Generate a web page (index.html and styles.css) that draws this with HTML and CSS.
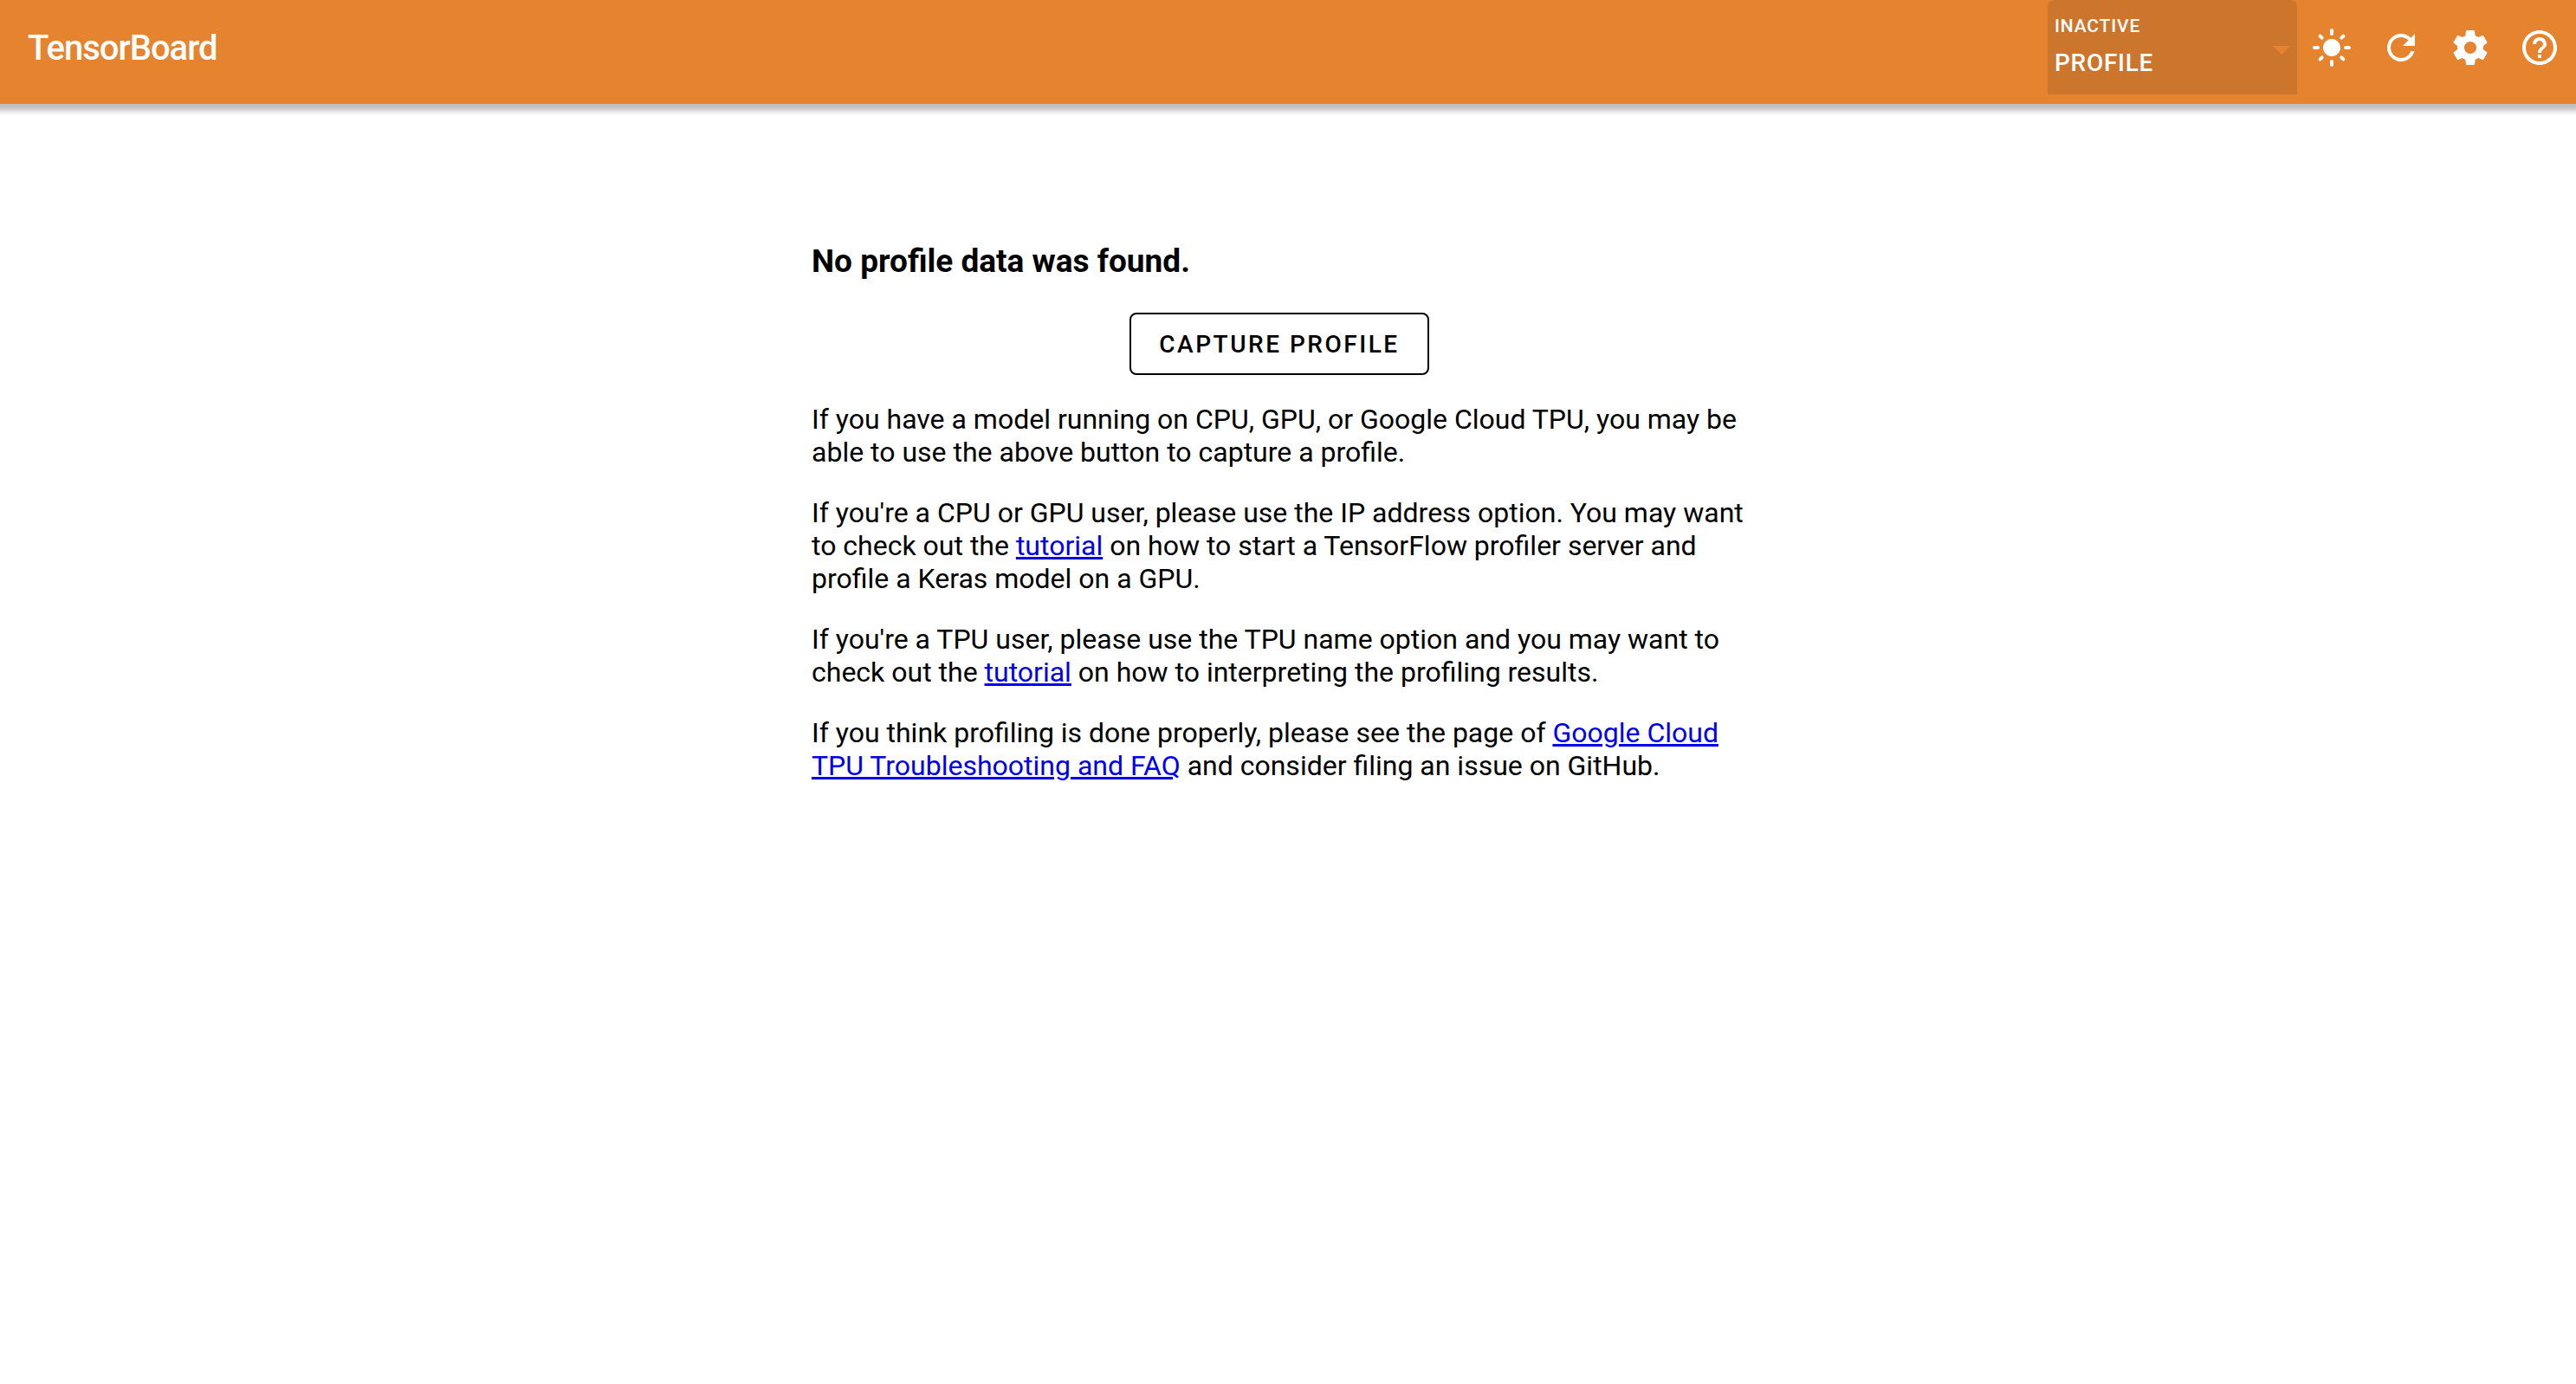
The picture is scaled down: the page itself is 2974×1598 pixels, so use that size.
FILE: index.html
```html
<!DOCTYPE html>
<html lang="en">
<head>
<meta charset="utf-8">
<meta name="viewport" content="width=device-width, initial-scale=1">
<title>TensorBoard</title>
<link rel="stylesheet" href="styles.css">
</head>
<body>
<header class="toolbar">
  <span class="brand">TensorBoard</span>
  <div class="plugin-picker">
    <label class="plugin-label" for="plugin">INACTIVE</label>
    <select class="plugin-select" id="plugin"><option>PROFILE</option></select>
    <svg class="plugin-arrow" viewBox="0 0 20 10" aria-hidden="true"><path d="M0 0h20L10 10z"/></svg>
  </div>
  <button class="icon-button" type="button" aria-label="Toggle theme">
    <svg class="icon" viewBox="0 0 24 24"><path d="M12 7c-2.76 0-5 2.24-5 5s2.24 5 5 5 5-2.24 5-5-2.24-5-5-5zM2 13h2c.55 0 1-.45 1-1s-.45-1-1-1H2c-.55 0-1 .45-1 1s.45 1 1 1zm18 0h2c.55 0 1-.45 1-1s-.45-1-1-1h-2c-.55 0-1 .45-1 1s.45 1 1 1zM11 2v2c0 .55.45 1 1 1s1-.45 1-1V2c0-.55-.45-1-1-1s-1 .45-1 1zm0 18v2c0 .55.45 1 1 1s1-.45 1-1v-2c0-.55-.45-1-1-1s-1 .45-1 1zM5.99 4.58c-.39-.39-1.03-.39-1.41 0-.39.39-.39 1.03 0 1.41l1.06 1.06c.39.39 1.03.39 1.41 0s.39-1.03 0-1.41L5.99 4.58zm12.37 12.37c-.39-.39-1.03-.39-1.41 0-.39.39-.39 1.03 0 1.41l1.06 1.06c.39.39 1.03.39 1.41 0 .39-.39.39-1.03 0-1.41l-1.06-1.06zm1.06-10.96c.39-.39.39-1.03 0-1.41-.39-.39-1.03-.39-1.41 0l-1.06 1.06c-.39.39-.39 1.03 0 1.41s1.03.39 1.41 0l1.06-1.06zM7.05 18.36c.39-.39.39-1.03 0-1.41-.39-.39-1.03-.39-1.41 0l-1.06 1.06c-.39.39-.39 1.03 0 1.41s1.03.39 1.41 0l1.06-1.06z"/></svg>
  </button>
  <button class="icon-button" type="button" aria-label="Reload">
    <svg class="icon" viewBox="0 0 24 24"><path d="M17.65 6.35C16.2 4.9 14.21 4 12 4c-4.42 0-7.99 3.58-7.99 8s3.57 8 7.99 8c3.73 0 6.84-2.55 7.73-6h-2.08c-.82 2.33-3.04 4-5.65 4-3.31 0-6-2.69-6-6s2.69-6 6-6c1.66 0 3.14.69 4.22 1.78L13 11h7V4l-2.35 2.35z"/></svg>
  </button>
  <button class="icon-button" type="button" aria-label="Settings">
    <svg class="icon" viewBox="0 0 24 24"><path d="M19.43 12.98c.04-.32.07-.64.07-.98s-.03-.66-.07-.98l2.11-1.65c.19-.15.24-.42.12-.64l-2-3.46c-.12-.22-.39-.3-.61-.22l-2.49 1c-.52-.4-1.08-.73-1.69-.98l-.38-2.65C14.46 2.18 14.25 2 14 2h-4c-.25 0-.46.18-.49.42l-.38 2.65c-.61.25-1.17.59-1.69.98l-2.49-1c-.23-.09-.49 0-.61.22l-2 3.46c-.13.22-.07.49.12.64l2.11 1.65c-.04.32-.07.65-.07.98s.03.66.07.98l-2.11 1.65c-.19.15-.24.42-.12.64l2 3.46c.12.22.39.3.61.22l2.49-1c.52.4 1.08.73 1.69.98l.38 2.65c.03.24.24.42.49.42h4c.25 0 .46-.18.49-.42l.38-2.65c.61-.25 1.17-.59 1.69-.98l2.49 1c.23.09.49 0 .61-.22l2-3.46c.12-.22.07-.49-.12-.64l-2.11-1.65zM12 15.5c-1.93 0-3.5-1.57-3.5-3.5s1.57-3.5 3.5-3.5 3.5 1.57 3.5 3.5-1.57 3.5-3.5 3.5z"/></svg>
  </button>
  <a class="icon-button" href="#help" aria-label="Help">
    <svg class="icon" viewBox="0 0 24 24"><path d="M11 18h2v-2h-2v2zm1-16C6.48 2 2 6.48 2 12s4.48 10 10 10 10-4.48 10-10S17.52 2 12 2zm0 18c-4.41 0-8-3.59-8-8s3.59-8 8-8 8 3.59 8 8-3.59 8-8 8zm0-14c-2.21 0-4 1.79-4 4h2c0-1.1.9-2 2-2s2 .9 2 2c0 2-3 1.75-3 5h2c0-2.25 3-2.5 3-5 0-2.21-1.79-4-4-4z"/></svg>
  </a>
</header>
<main class="content">
  <section class="notice">
    <h3 class="notice-title">No profile data was found.</h3>
    <button class="capture-button" type="button">CAPTURE PROFILE</button>
    <p>If you have a model running on CPU, GPU, or Google Cloud TPU, you may be able to use the above button to capture a profile.</p>
    <p>If you're a CPU or GPU user, please use the IP address option. You may want to check out the <a href="#gpu">tutorial</a> on how to start a TensorFlow profiler server and profile a Keras model on a GPU.</p>
    <p>If you're a TPU user, please use the TPU name option and you may want to check out the <a href="#tpu">tutorial</a> on how to interpreting the profiling results.</p>
    <p>If you think profiling is done properly, please see the page of <a href="#faq">Google Cloud TPU Troubleshooting and FAQ</a> and consider filing an issue on GitHub.</p>
  </section>
</main>
</body>
</html>
```
FILE: styles.css
```css
* {
  box-sizing: border-box;
}

body {
  margin: 0;
  background: #fff;
  color: #000;
  font-family: Roboto, sans-serif;
  font-size: 32px;
  line-height: 38px;
}

.toolbar {
  display: flex;
  align-items: center;
  height: 120px;
  padding: 0 2px 10px 32px;
  background: #e5832f;
  color: #fff;
  box-shadow: 0 2px 6px 6px rgba(0, 0, 0, 0.25);
}

.brand {
  margin-right: auto;
  padding-top: 2px;
  font-size: 40px;
  font-weight: 500;
  line-height: 48px;
  letter-spacing: -0.025em;
}

.plugin-picker {
  position: relative;
  align-self: flex-start;
  width: 288px;
  height: 109px;
  padding: 16px 8px 0;
  border-radius: 8px 8px 0 0;
  background: #cc752c;
  font-weight: 500;
}

.plugin-label {
  display: block;
  font-size: 21px;
  line-height: 28px;
  letter-spacing: 0.04em;
}

.plugin-select {
  display: block;
  width: 100%;
  height: 58px;
  padding: 0;
  border: 0;
  appearance: none;
  background: transparent;
  color: inherit;
  font: inherit;
  font-size: 28px;
  letter-spacing: 0.025em;
}

.plugin-arrow {
  position: absolute;
  top: 53px;
  right: 8px;
  width: 20px;
  height: 10px;
  fill: #e5832f;
}

.icon-button {
  display: flex;
  align-items: center;
  justify-content: center;
  width: 80px;
  height: 80px;
  padding: 0;
  border: 0;
  background: transparent;
  color: inherit;
}

.icon {
  width: 48px;
  height: 48px;
  fill: currentColor;
}

.content {
  padding: 160px 20px 32px 0;
}

.notice {
  display: flex;
  flex-direction: column;
  max-width: 1080px;
  margin: 0 auto;
}

.notice-title {
  margin: 0 0 37px;
  font-size: 37px;
  font-weight: 700;
  line-height: 44px;
}

.capture-button {
  align-self: center;
  height: 72px;
  padding: 0 32px;
  border: 2px solid #000;
  border-radius: 8px;
  background: #fff;
  color: #000;
  font-family: inherit;
  font-size: 28px;
  font-weight: 500;
  letter-spacing: 0.09em;
}

.notice p {
  margin: 32px 0 0;
}

.notice a {
  color: #0000ee;
}
```
